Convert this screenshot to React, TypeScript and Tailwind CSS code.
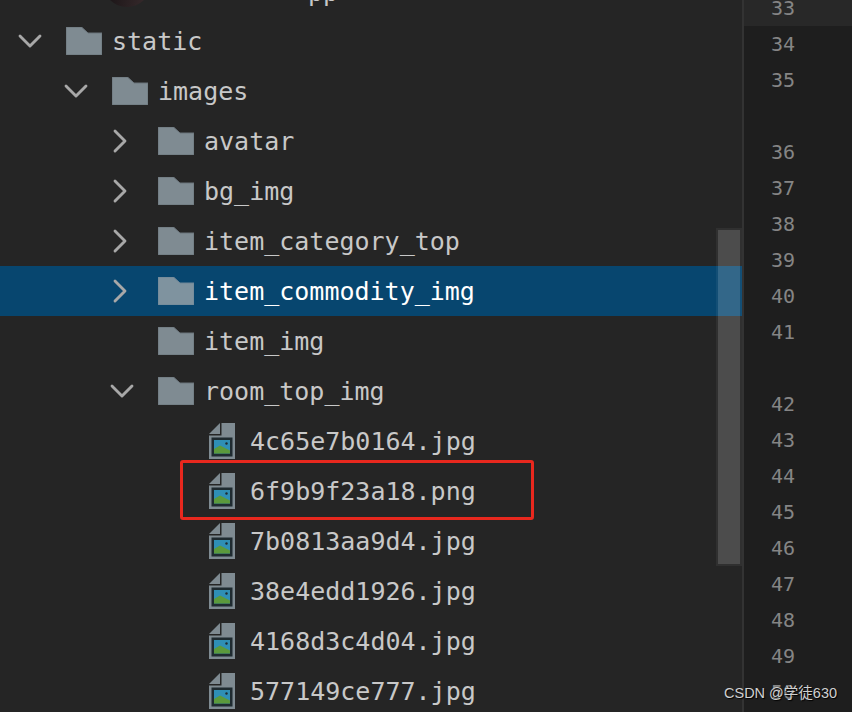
import { ChevronDown, ChevronRight } from 'lucide-react';

type Row = {
    name: string;
    depth: number;
    kind: 'open' | 'closed' | 'leaf' | 'file';
    selected?: boolean;
};

const rows: Row[] = [
    { name: 'static', depth: 0, kind: 'open' },
    { name: 'images', depth: 1, kind: 'open' },
    { name: 'avatar', depth: 2, kind: 'closed' },
    { name: 'bg_img', depth: 2, kind: 'closed' },
    { name: 'item_category_top', depth: 2, kind: 'closed' },
    { name: 'item_commodity_img', depth: 2, kind: 'closed', selected: true },
    { name: 'item_img', depth: 2, kind: 'leaf' },
    { name: 'room_top_img', depth: 2, kind: 'open' },
    { name: '4c65e7b0164.jpg', depth: 3, kind: 'file' },
    { name: '6f9b9f23a18.png', depth: 3, kind: 'file' },
    { name: '7b0813aa9d4.jpg', depth: 3, kind: 'file' },
    { name: '38e4edd1926.jpg', depth: 3, kind: 'file' },
    { name: '4168d3c4d04.jpg', depth: 3, kind: 'file' },
    { name: '577149ce777.jpg', depth: 3, kind: 'file' },
];

// null is a wrapped line: it takes a row in the gutter but has no number
const lineNumbers = [
    33, 34, 35, null, 36, 37, 38, 39, 40, 41, null, 42, 43, 44, 45, 46, 47, 48, 49, 50,
];

function FolderIcon({ selected }: { selected?: boolean }) {
    return (
        <svg width="36" height="28" viewBox="0 0 36 28" className="shrink-0">
            <path
                d="M0 0H15.5L22 6H36V28H0Z"
                fill={selected ? '#7f939f' : '#7f8b92'}
                stroke={selected ? '#6f8698' : '#6b757b'}
                strokeWidth="1"
            />
        </svg>
    );
}

function ImageFileIcon() {
    return (
        <svg width="26" height="36" viewBox="0 0 26 36" className="shrink-0">
            <path d="M0 11L11 0V11Z" fill="#7f8b92" />
            <path d="M12.5 0H26V36H0V12.5H12.5Z" fill="#7f8b92" />
            <rect x="2.5" y="14.5" width="21" height="19" fill="#1f2b30" />
            <rect x="5" y="17" width="16" height="13.5" fill="#2f8fb5" />
            <path d="M5 30.5V26L11 22.5L21 27.5V30.5Z" fill="#5b9a3c" />
            <circle cx="17.5" cy="20.5" r="1.2" fill="#1f2b30" />
        </svg>
    );
}

function TreeRow({ row }: { row: Row }) {
    const left = row.kind === 'file' ? 209 : 20 + row.depth * 46;
    return (
        <div
            className={`flex h-[50px] items-center ${row.selected ? 'bg-[#07466f] text-white' : 'text-[#c8c8c8]'}`}
        >
            <div className="shrink-0" style={{ width: left }} />
            {row.kind === 'file' ? (
                <>
                    <ImageFileIcon />
                    <span className="ml-[15px] whitespace-pre pt-[2px]">{row.name}</span>
                </>
            ) : (
                <>
                    <div className="flex w-[46px] shrink-0 items-center">
                        {row.kind === 'open' && (
                            <ChevronDown
                                className="-ml-[10px] h-[40px] w-[40px] text-[#a8a8a8]"
                                strokeWidth={1.7}
                            />
                        )}
                        {row.kind === 'closed' && (
                            <ChevronRight
                                className="-ml-[12px] h-[40px] w-[40px] text-[#a8a8a8]"
                                strokeWidth={1.7}
                            />
                        )}
                    </div>
                    <FolderIcon selected={row.selected} />
                    <span className="ml-[10px] whitespace-pre pt-[2px]">{row.name}</span>
                </>
            )}
        </div>
    );
}

export default function App() {
    return (
        <div className="relative flex h-[712px] w-[852px] overflow-hidden bg-[#1e1e1e] font-['DejaVu_Sans_Mono','Liberation_Mono',monospace]">
            <div className="relative w-[742px] shrink-0 overflow-hidden bg-[#252525] text-[25px]">
                {/* row scrolled off the top, only its bottom edge shows */}
                <div className="flex h-[16px] overflow-hidden">
                    <div className="-mt-[41px] ml-[103px] h-[48px] w-[48px] shrink-0 rounded-full bg-[linear-gradient(100deg,#141012,#3a2c2e)]" />
                    <span className="-mt-[26px] ml-[157px] whitespace-pre text-[#c8c8c8]">pp</span>
                </div>
                {rows.map((row) => (
                    <TreeRow key={row.name} row={row} />
                ))}

                <div className="absolute top-[228px] right-0 h-[338px] w-[26px] border-[2px] border-[#ffffff0d] bg-[#ffffff2e] bg-clip-padding" />
                <div className="absolute top-[460px] left-[180px] h-[60px] w-[354px] rounded-[3px] border-[3px] border-[#e8281e]" />
            </div>

            <div className="h-full w-[2px] shrink-0 bg-[#333333]" />

            <div className="flex-1 text-[20px] text-[#858585]">
                <div className="-mt-[10px]">
                    {lineNumbers.map((n, i) => (
                        <div
                            key={i}
                            className={`h-[36px] pl-[27px] leading-[36px] ${i === 0 ? 'bg-[#282828]' : ''}`}
                        >
                            {n}
                        </div>
                    ))}
                </div>
            </div>

            <div className="absolute top-[684px] left-[724px] font-['Liberation_Sans','Noto_Sans_CJK_SC',sans-serif] text-[14.5px] leading-[18px] text-[#d0d0d0] [text-shadow:1px_1px_1px_#000]">
                CSDN @学徒630
            </div>
        </div>
    );
}
